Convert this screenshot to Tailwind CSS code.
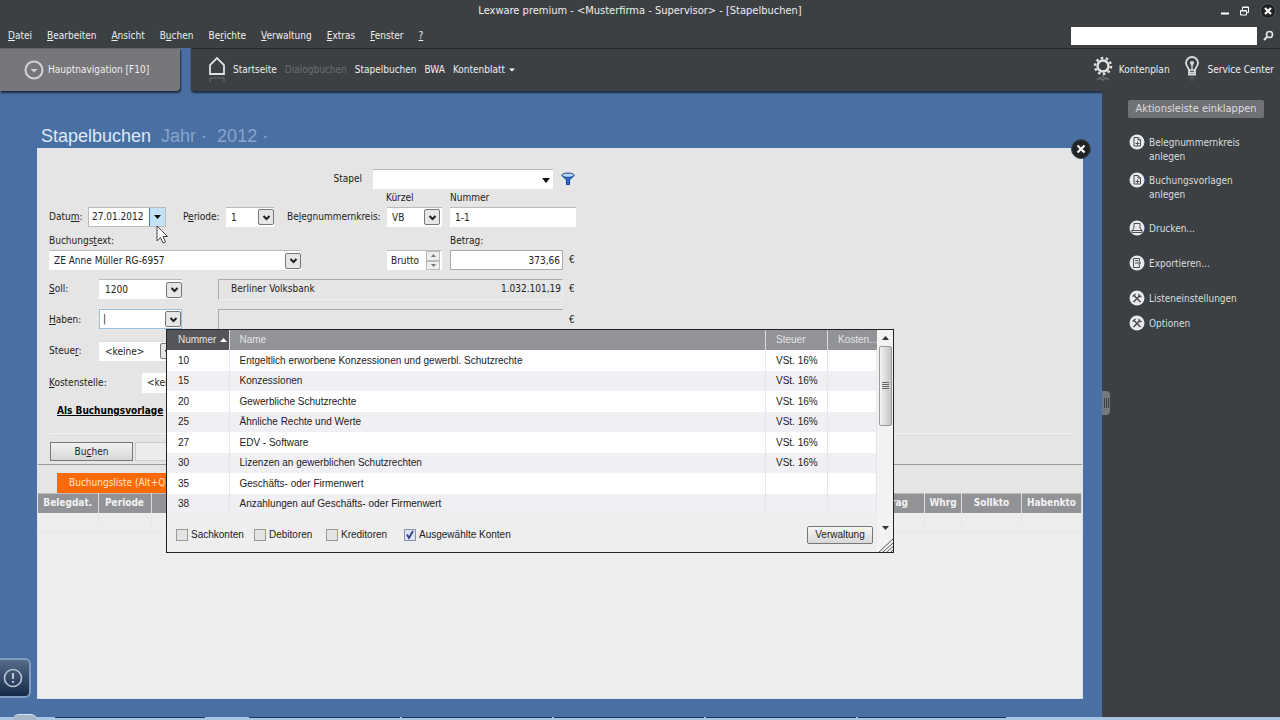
<!DOCTYPE html>
<html lang="de">
  <head>
    <meta charset="UTF-8" />
    <meta name="viewport" content="width=device-width, initial-scale=1.0" />
    <title>Lexware premium - Stapelbuchen</title>
    <script src="https://cdn.jsdelivr.net/npm/@tailwindcss/browser@4"></script>
  </head>
  <body class="h-screen flex flex-col overflow-hidden bg-[#4a70a3] font-['DejaVu_Sans_Condensed','DejaVu_Sans',sans-serif] text-[10px] leading-[14px] text-[#222]">
    <svg class="hidden">
      <symbol id="chevron" viewBox="0 0 9 9">
        <path d="M1.5 3l3 3 3-3" fill="none" stroke="#222" stroke-width="2" />
      </symbol>
      <symbol id="new-doc" viewBox="0 0 16 16">
        <circle cx="8" cy="8" r="7.5" fill="#e8e9ea" />
        <path d="M5 3.500h4l2.500 2.500v6H5zM9 3.500V6h2.500M6.500 9.500h4M8.500 7.500v4" fill="none" stroke="#4a4c50" />
      </symbol>
      <symbol id="tools" viewBox="0 0 16 16">
        <circle cx="8" cy="8" r="7.500" fill="#e8e9ea" />
        <path d="M5 5.500l6.500 6.500M11 5.500L4.500 12" fill="none" stroke="#4a4c50" stroke-width="1.500" />
        <path d="M3.500 6.500L6.500 4M10 4v2.500h2.500" fill="none" stroke="#4a4c50" stroke-width="1.300" />
      </symbol>
    </svg>

    <!-- Titel und Menü -->
    <header class="bg-[#3d4043] text-[#eee]">
      <div class="relative h-[22px] flex items-center justify-end pr-1 gap-[11px]">
        <h1 class="absolute inset-x-0 text-center text-[11px] pointer-events-none">Lexware premium - &lt;Musterfirma - Supervisor&gt; - [Stapelbuchen]</h1>
        <button aria-label="Minimieren">
          <svg class="w-2 h-3" viewBox="0 0 8 12"><path d="M0 8.500h8" stroke="#fff" stroke-width="2" /></svg>
        </button>
        <button aria-label="Wiederherstellen">
          <svg class="w-[9px] h-3" viewBox="0 0 9 12"><path d="M2.500 5V2h6v5.500H6.500M2.500 2.500h6M.5 5.500h6V10H.5zM.5 6h6" fill="none" stroke="#fff" /></svg>
        </button>
        <button aria-label="Schließen">
          <svg class="w-4 h-4" viewBox="0 0 16 16"><circle cx="8" cy="8" r="7.500" fill="#222" stroke="#55585a" /><path d="M5 5l6 6M11 5l-6 6" stroke="#fff" stroke-width="2.200" /></svg>
        </button>
      </div>
      <div class="h-[26px] flex items-center pt-[2px] pl-2 pr-[5px]">
        <nav class="flex gap-[15px]">
          <a href="#"><u>D</u>atei</a>
          <a href="#"><u>B</u>earbeiten</a>
          <a href="#"><u>A</u>nsicht</a>
          <a href="#">B<u>u</u>chen</a>
          <a href="#">Be<u>r</u>ichte</a>
          <a href="#"><u>V</u>erwaltung</a>
          <a href="#"><u>E</u>xtras</a>
          <a href="#"><u>F</u>enster</a>
          <a href="#"><u>?</u></a>
        </nav>
        <input type="text" aria-label="Suche" class="ml-auto w-[186px] h-[18px] px-1 bg-white text-black" />
        <button aria-label="Suchen" class="ml-1">
          <svg class="w-[14px] h-[14px]" viewBox="0 0 14 14" fill="none" stroke="#e4e4e4"><circle cx="8.500" cy="5.500" r="3" stroke-width="1.600" /><path d="M6.500 7.500L3 11" stroke-width="2" /></svg>
        </button>
      </div>
    </header>

    <!-- Symbolleiste -->
    <div class="h-[43px] shrink-0 flex gap-[11px] text-[#eee]">
      <button class="w-[180px] flex items-center gap-1 pl-6 bg-[#77767b] border-t border-[#66666a] rounded-br-sm shadow-[1px_2px_2px_#1c2c44]">
        <svg class="w-5 h-5" viewBox="0 0 20 20"><circle cx="10" cy="10" r="8.500" fill="none" stroke="#d4d4d6" stroke-width="2" /><path d="M6.500 9h7L10 12.500z" fill="#d4d4d6" /></svg>
        Hauptnavigation [F10]
      </button>
      <nav class="flex-1 flex items-center pl-4 pr-[6px] bg-[#3d4043] border-t border-[#25282a] rounded-bl-sm shadow-[0_2px_2px_#1c2c44]">
        <svg class="w-5 h-7" viewBox="0 0 20 28" fill="none"><path d="M3 18V9l7-7 7 7v9z" stroke="#e2e2e2" stroke-width="1.800" /><path d="M3 22h14M3 22v4M17 22v4" stroke="#6a6d70" /></svg>
        <a href="#" class="ml-[6px]">Startseite</a>
        <a href="#" class="ml-2 text-[#6a6d70]">Dialogbuchen</a>
        <a href="#" class="ml-2">Stapelbuchen</a>
        <a href="#" class="ml-2">BWA</a>
        <a href="#" class="ml-2">Kontenblatt</a>
        <svg class="ml-1 w-[6px] h-1" viewBox="0 0 6 4"><path d="M0 .5h6L3 3.500z" fill="#fff" /></svg>
        <svg class="ml-auto w-5 h-7" viewBox="0 0 20 28" fill="none">
          <circle cx="10" cy="10" r="5.500" stroke="#e2e2e2" stroke-width="2.400" />
          <circle cx="10" cy="10" r="8" stroke="#e2e2e2" stroke-width="2.400" stroke-dasharray="2.500 2.527" />
          <path d="M4 24l3-2 3 2 3-2 3 2M10 19v3" stroke="#6a6d70" stroke-width="1.500" />
        </svg>
        <a href="#" class="ml-[6px]">Kontenplan</a>
        <svg class="ml-3 w-5 h-7" viewBox="0 0 20 28" fill="none">
          <path d="M7 14c0-2-3-3.500-3-7a6 6 0 0 1 12 0c0 3.500-3 5-3 7v4.500H7z" stroke="#dadada" stroke-width="1.800" />
          <path d="M10 7v7M7 14h6M7 16.500h6" stroke="#dadada" stroke-width="1.400" /><circle cx="10" cy="7" r="2" fill="#dadada" />
          <path d="M7 22h6M8 24h4" stroke="#595c5f" />
        </svg>
        <a href="#" class="ml-[6px]">Service Center</a>
      </nav>
    </div>

    <div class="flex-1 min-h-0 flex">
      <!-- Arbeitsbereich -->
      <main class="relative flex-1 min-w-0 flex flex-col pl-[37px] pr-[19px] pb-[18px]">
        <h2 class="h-[57px] pt-[34px] pl-1 flex gap-[10px] font-['Liberation_Sans',Arial,sans-serif] text-lg leading-[22px] text-[#86a5cb]">
          <span class="text-[#dce8f6]">Stapelbuchen</span>
          <span>Jahr ·</span>
          <span>2012 ·</span>
        </h2>
        <button aria-label="Stapelbuchen schließen" class="absolute right-[11px] top-12">
          <svg class="w-5 h-5" viewBox="0 0 20 20"><circle cx="10" cy="10" r="9.500" fill="#1f2426" stroke="#3c4a55" /><path d="M6.500 6.500l7 7M13.500 6.500l-7 7" stroke="#fff" stroke-width="2.200" /></svg>
        </button>

        <section class="flex-1 min-h-0 bg-[#ededed] border border-[#dbe6f0]">
          <form class="h-[316px] bg-[#e5e5e5] border-b border-[#999]">
            <div class="pt-5 flex items-center h-10 pl-[11px]">
              <label for="stapel" class="w-[313px] text-right">Stapel</label>
              <div class="relative ml-[11px]">
                <select id="stapel" class="appearance-none block w-[180px] h-5 bg-white border-t border-[#bbb]"><option></option></select>
                <svg class="absolute right-[3px] top-[9px] w-2 h-[5px] pointer-events-none" viewBox="0 0 8 5"><path d="M0 0h8L4 5z" fill="#111" /></svg>
              </div>
              <button type="button" aria-label="Filter" class="ml-2">
                <svg class="w-[14px] h-[14px]" viewBox="0 0 14 14"><path d="M1 3.500L5.500 8v4.500h3V8L13 3.500z" fill="#2f6fd0" stroke="#123f94" /><ellipse cx="7" cy="3.200" rx="6" ry="2.200" fill="#b8d8f8" stroke="#123f94" /></svg>
              </button>
            </div>
            <div class="h-[18px] flex items-center">
              <label for="kuerzel" class="pl-[348px] w-[412px]">Kürzel</label>
              <label for="nummer">Nummer</label>
            </div>
            <div class="h-5 flex items-center pl-[11px]">
              <label for="datum" class="w-[39px]">Datu<u>m</u>:</label>
              <div class="w-[78px] h-5 flex bg-white border border-[#bbb]">
                <input id="datum" type="text" value="27.01.2012" class="w-[60px] pl-[3px]" />
                <button type="button" aria-label="Kalender" class="flex-1 grid place-items-center bg-[#c3e2f5] border-l border-[#3c7fb1]">
                  <svg class="w-[7px] h-1" viewBox="0 0 7 4"><path d="M0 0h7L3.500 4z" fill="#111" /></svg>
                </button>
              </div>
              <label for="periode" class="ml-[17px] w-[43px]">P<u>e</u>riode:</label>
              <div class="relative">
                <select id="periode" class="appearance-none block w-12 h-5 pl-[5px] bg-white border-t border-[#bbb]"><option>1</option></select>
                <span class="absolute right-0 top-[2px] size-4 grid place-items-center bg-[#e6e6e6] border border-[#777] rounded-xs pointer-events-none"><svg class="size-[9px]"><use href="#chevron" /></svg></span>
              </div>
              <label for="kuerzel" class="ml-[13px] w-[100px]">Be<u>l</u>egnummernkreis:</label>
              <div class="relative">
                <select id="kuerzel" class="appearance-none block w-[55px] h-5 pl-[5px] bg-white border-t border-[#bbb]"><option>VB</option></select>
                <span class="absolute right-[2px] top-[2px] size-4 grid place-items-center bg-[#e6e6e6] border border-[#777] rounded-xs pointer-events-none"><svg class="size-[9px]"><use href="#chevron" /></svg></span>
              </div>
              <input id="nummer" type="text" value="1-1" class="ml-2 w-[126px] h-5 pl-[5px] bg-white border-t border-[#bbb]" />
            </div>
            <div class="mt-[6px] h-4 flex items-center pl-[11px]">
              <label for="text" class="w-[401px]">Buchungs<u>t</u>ext:</label>
              <label for="betrag">Betra<u>g</u>:</label>
            </div>
            <div class="mt-px h-5 flex items-center pl-[11px]">
              <div class="w-[252px] h-5 flex items-center bg-white border-t border-[#bbb]">
                <input id="text" type="text" value="ZE Anne Müller RG-6957" class="flex-1 min-w-0 pl-[5px]" />
                <button type="button" aria-label="Texte anzeigen" class="size-4 grid place-items-center bg-[#e6e6e6] border border-[#777] rounded-xs"><svg class="size-[9px]"><use href="#chevron" /></svg></button>
              </div>
              <div class="ml-[86px] w-[55px] h-5 flex bg-white border-t border-[#bbb]">
                <input type="text" aria-label="Betragsart" value="Brutto" class="w-[39px] pl-1" />
                <div class="w-[14px] flex flex-col">
                  <button type="button" aria-label="Vor" class="flex-1 grid place-items-center bg-[#eee] border border-[#bbb]"><svg class="w-[5px] h-[3px]" viewBox="0 0 5 3"><path d="M0 3h5L2.500 0z" fill="#777" /></svg></button>
                  <button type="button" aria-label="Zurück" class="flex-1 grid place-items-center bg-[#eee] border border-[#bbb]"><svg class="w-[5px] h-[3px]" viewBox="0 0 5 3"><path d="M0 0h5L2.500 3z" fill="#777" /></svg></button>
                </div>
              </div>
              <input id="betrag" type="text" value="373,66" class="ml-2 w-[113px] h-5 pr-[2px] text-right bg-white border border-[#aaa]" />
              <span class="ml-[6px]">€</span>
            </div>
            <div class="mt-[9px] h-5 flex items-center pl-[11px]">
              <label for="soll" class="w-[50px]"><u>S</u>oll:</label>
              <div class="w-[83px] h-5 flex items-center bg-white border-t border-[#bbb]">
                <input id="soll" type="text" value="1200" class="flex-1 min-w-0 pl-[6px]" />
                <button type="button" aria-label="Sollkonten anzeigen" class="size-4 grid place-items-center bg-[#e6e6e6] border border-[#777] rounded-xs"><svg class="size-[9px]"><use href="#chevron" /></svg></button>
              </div>
              <output for="soll" class="ml-9 w-[345px] h-[21px] flex items-center justify-between pl-3 pr-px border border-[#aaa] border-r-[#eee] border-b-[#eee]"><span>Berliner Volksbank</span><span>1.032.101,19</span></output>
              <span class="ml-[6px]">€</span>
            </div>
            <div class="mt-[10px] h-5 flex items-center pl-[11px]">
              <label for="haben" class="pt-[2px] w-[50px]"><u>H</u>aben:</label>
              <div class="relative">
                <div class="w-[83px] h-5 flex items-center bg-white border border-[#9cc0dc]">
                  <input id="haben" type="text" value="|" class="flex-1 min-w-0 pl-[3px]" />
                  <button type="button" aria-label="Habenkonten anzeigen" class="size-4 grid place-items-center bg-[#e6e6e6] border border-[#777] rounded-xs"><svg class="size-[9px]"><use href="#chevron" /></svg></button>
                </div>

                <!-- Kontenauswahl -->
                <div class="absolute z-10 left-[67px] top-full w-[728px] h-[224px] flex flex-col bg-[#eee] border border-[#222] font-['Liberation_Sans',Arial,sans-serif]">
                  <div class="flex-1 min-h-0 flex flex-col pr-4">
                    <table class="w-full table-fixed text-left">
                      <colgroup><col class="w-[62px]" /><col /><col class="w-[62px]" /><col class="w-[49px]" /></colgroup>
                      <thead class="bg-[#929397] text-[#e4e4e8]">
                        <tr class="h-5">
                          <th class="pl-[11px] font-normal bg-[#55565a] border-r border-[#ddd]"><span class="flex items-center gap-1">Nummer <svg class="w-[7px] h-1" viewBox="0 0 7 4"><path d="M0 4h7L3.500 0z" fill="#fff" /></svg></span></th>
                          <th class="pl-[10px] font-normal border-r border-[#ddd]">Name</th>
                          <th class="pl-[10px] font-normal border-r border-[#ddd]">Steuer</th>
                          <th class="pl-[10px] font-normal whitespace-nowrap">Kosten...</th>
                        </tr>
                      </thead>
                      <tbody class="[&_td]:border-r [&_td]:border-[#e6e6ea] [&_tr:nth-child(odd)]:bg-white [&_tr:nth-child(even)]:bg-[#f0f0f4]">
                        <tr class="h-[21px]"><td class="pl-[11px]">10</td><td class="pl-[10px]">Entgeltlich erworbene Konzessionen und gewerbl. Schutzrechte</td><td class="pl-[10px]">VSt. 16%</td><td></td></tr>
                        <tr class="h-5"><td class="pl-[11px]">15</td><td class="pl-[10px]">Konzessionen</td><td class="pl-[10px]">VSt. 16%</td><td></td></tr>
                        <tr class="h-[21px]"><td class="pl-[11px]">20</td><td class="pl-[10px]">Gewerbliche Schutzrechte</td><td class="pl-[10px]">VSt. 16%</td><td></td></tr>
                        <tr class="h-5"><td class="pl-[11px]">25</td><td class="pl-[10px]">Ähnliche Rechte und Werte</td><td class="pl-[10px]">VSt. 16%</td><td></td></tr>
                        <tr class="h-[21px]"><td class="pl-[11px]">27</td><td class="pl-[10px]">EDV - Software</td><td class="pl-[10px]">VSt. 16%</td><td></td></tr>
                        <tr class="h-5"><td class="pl-[11px]">30</td><td class="pl-[10px]">Lizenzen an gewerblichen Schutzrechten</td><td class="pl-[10px]">VSt. 16%</td><td></td></tr>
                        <tr class="h-[21px]"><td class="pl-[11px]">35</td><td class="pl-[10px]">Geschäfts- oder Firmenwert</td><td></td><td></td></tr>
                        <tr class="h-5"><td class="pl-[11px]">38</td><td class="pl-[10px]">Anzahlungen auf Geschäfts- oder Firmenwert</td><td></td><td></td></tr>
                      </tbody>
                    </table>
                    <div class="flex-1 flex items-center pt-1 pl-[9px] pr-1">
                      <label class="w-[78px] flex items-center gap-[3px]"><input type="checkbox" class="appearance-none size-3 bg-[#e4e4e4] border border-[#999]" />Sachkonten</label>
                      <label class="w-[72px] flex items-center gap-[3px]"><input type="checkbox" class="appearance-none size-3 bg-[#e4e4e4] border border-[#999]" />Debitoren</label>
                      <label class="w-[78px] flex items-center gap-[3px]"><input type="checkbox" class="appearance-none size-3 bg-[#e4e4e4] border border-[#999]" />Kreditoren</label>
                      <label class="relative flex items-center gap-[3px]">
                        <input type="checkbox" checked class="appearance-none size-3 bg-[#dde3f2] border border-[#8a90a8]" />
                        <svg class="absolute left-px w-[10px] h-[10px] pointer-events-none" viewBox="0 0 10 10"><path d="M2 4.500l2 3.500 4-7" fill="none" stroke="#33408c" stroke-width="1.800" /></svg>
                        Ausgewählte Konten
                      </label>
                      <button type="button" class="ml-auto w-[66px] h-[18px] bg-linear-to-b from-[#f6f6f6] to-[#d8d8d8] border border-[#777] rounded-xs">Verwaltung</button>
                    </div>
                  </div>
                  <div class="absolute right-0 inset-y-0 w-4 flex flex-col items-center bg-[#f2f2f2]">
                    <svg class="mt-[6px] w-[7px] h-1" viewBox="0 0 7 4"><path d="M0 4h7L3.500 0z" fill="#333" /></svg>
                    <div class="mt-[6px] w-[13px] h-20 grid place-items-center bg-linear-to-r from-[#f4f4f4] to-[#c4c4c8] border border-[#999] rounded-xs">
                      <svg class="w-[7px] h-2" viewBox="0 0 7 8"><path d="M0 .5h7M0 2.500h7M0 4.500h7M0 6.500h7" stroke="#666" /></svg>
                    </div>
                    <svg class="mt-auto w-[7px] h-1" viewBox="0 0 7 4"><path d="M0 0h7L3.500 4z" fill="#333" /></svg>
                    <svg class="mt-[8px] w-4 h-[14px]" viewBox="0 0 16 14"><path d="M2 14L16 1M6 14L16 5M10 14l6-5.500M14 14l2-2" stroke="#555" /></svg>
                  </div>
                </div>
              </div>
              <output for="haben" class="ml-9 w-[345px] h-[21px] border-t border-l border-[#aaa]"></output>
              <span class="pt-[2px] ml-[6px]">€</span>
            </div>
            <div class="mt-3 h-5 flex items-center pl-[11px]">
              <label for="steuer" class="w-[50px]">Steue<u>r</u>:</label>
              <div class="relative">
                <select id="steuer" class="appearance-none block w-[77px] h-5 pl-[6px] bg-white border-t border-[#ddd]"><option>&lt;keine&gt;</option></select>
                <span class="absolute right-0 top-[2px] size-4 grid place-items-center bg-[#e6e6e6] border border-[#777] rounded-xs pointer-events-none"><svg class="size-[9px]"><use href="#chevron" /></svg></span>
              </div>
            </div>
            <div class="mt-3 h-5 flex items-center pl-[11px]">
              <label for="kostenstelle" class="w-[93px]"><u>K</u>ostenstelle:</label>
              <select id="kostenstelle" class="appearance-none w-[77px] h-5 pl-[5px] bg-white"><option>&lt;keine&gt;</option></select>
            </div>
            <div class="mt-[10px] h-4 flex items-center pl-[19px]">
              <a href="#" class="font-bold underline text-black">Als Buchungsvorlage</a>
            </div>
            <div class="mt-[14px] mr-[9px] ml-3 border-t border-[#f4f4f4]"></div>
            <div class="mt-2 flex gap-[2px] pl-3">
              <button type="button" class="w-[83px] h-[19px] bg-linear-to-b from-[#f2f2f2] to-[#d6d6d6] border border-[#777]">Bu<u>c</u>hen</button>
              <button type="button" aria-label="Verwerfen" class="w-[83px] h-[19px] bg-[#ececec] border border-[#ccc]"></button>
            </div>
          </form>

          <!-- Buchungsliste -->
          <div class="h-7 pt-2 pl-[19px] flex bg-[#e5e5e5]">
            <button class="w-[130px] pl-3 text-left whitespace-nowrap bg-[#fb6a05] text-[#ffe6d0]">Buchungsliste (Alt+Q)</button>
          </div>
          <table class="w-full table-fixed border-t border-[#bbb]">
            <colgroup><col class="w-[60px]" /><col class="w-[53px]" /><col /><col class="w-[70px]" /><col class="w-[37px]" /><col class="w-[60px]" /><col class="w-[60px]" /></colgroup>
            <thead class="bg-[#929397] text-[#f2f2f2]">
              <tr class="h-[19px] [&_th]:border-r [&_th]:border-[#ddd]">
                <th>Belegdat.</th><th>Periode</th><th></th><th class="pr-4 text-right">Betrag</th><th>Whrg</th><th>Sollkto</th><th>Habenkto</th>
              </tr>
            </thead>
            <tbody>
              <tr class="h-5 border-b border-[#e6e6e6] [&_td]:border-r [&_td]:border-[#e8e8e8]"><td></td><td></td><td></td><td></td><td></td><td></td><td></td></tr>
            </tbody>
          </table>
        </section>

        <!-- Mauszeiger -->
        <svg class="absolute left-[156px] top-[134px] w-3 h-[19px]" viewBox="0 0 12 19"><path d="M1 1v15l3.500-3.500L7 18l2.500-1-2.500-5.500h4.500z" fill="#fff" stroke="#444" /></svg>

        <button aria-label="Hinweise" class="absolute left-0 bottom-[19px] w-[31px] h-10 flex items-center pl-[3px] bg-linear-to-b from-[#566b88] to-[#172b49] border-2 border-l-0 border-[#7f9cc4] rounded-r-md">
          <svg class="w-5 h-5" viewBox="0 0 20 20" fill="none" stroke="#b8c4d4" stroke-width="1.600"><circle cx="10" cy="10" r="8.500" /><path d="M10 5v6M10 13v2" stroke-width="2" /></svg>
        </button>
      </main>

      <!-- Aktionsleiste -->
      <aside class="relative w-[178px] pt-[9px] pl-[26px] bg-[#3d4043] text-[#dcdcdc]">
        <button class="w-[136px] h-[18px] text-[11px] bg-[#707175] rounded-xs">Aktionsleiste einklappen</button>
        <ul class="mt-4 pl-px">
          <li><a href="#" class="flex gap-1"><svg class="size-4 shrink-0"><use href="#new-doc" /></svg><span class="pt-[2px]">Belegnummernkreis<br />anlegen</span></a></li>
          <li class="mt-2"><a href="#" class="flex gap-1"><svg class="size-4 shrink-0"><use href="#new-doc" /></svg><span class="pt-[2px]">Buchungsvorlagen<br />anlegen</span></a></li>
          <li class="mt-[18px]"><a href="#" class="flex gap-1">
            <svg class="size-4 shrink-0" viewBox="0 0 16 16"><circle cx="8" cy="8" r="7.500" fill="#e8e9ea" /><path d="M5 8V3.500h6V8M5 8L3 10.500v2h10v-2L11 8M3 10.500h10" fill="none" stroke="#4a4c50" /></svg>
            <span class="pt-[2px]">Drucken...</span></a></li>
          <li class="mt-[19px]"><a href="#" class="flex gap-1">
            <svg class="size-4 shrink-0" viewBox="0 0 16 16"><circle cx="8" cy="8" r="7.500" fill="#e8e9ea" /><path d="M10.500 6V3.500h-6v9h6V10M6 8h5.500M9.500 6l2 2-2 2M6 5.500h3" fill="none" stroke="#4a4c50" /></svg>
            <span class="pt-[2px]">Exportieren...</span></a></li>
          <li class="mt-[19px]"><a href="#" class="flex gap-1"><svg class="size-4 shrink-0"><use href="#tools" /></svg><span class="pt-[2px]">Listeneinstellungen</span></a></li>
          <li class="mt-[9px]"><a href="#" class="flex gap-1"><svg class="size-4 shrink-0"><use href="#tools" /></svg><span class="pt-[2px]">Optionen</span></a></li>
        </ul>
        <button aria-label="Leiste einklappen" class="absolute left-0 top-[300px] w-2 h-6 grid place-items-center bg-[#77787b] rounded-r-sm">
          <svg class="w-[5px] h-[10px]" viewBox="0 0 5 10"><path d="M.5 0v10M2.500 0v10M4.500 0v10" stroke="#3d4043" /></svg>
        </button>
      </aside>
    </div>

    <!-- Taskleiste -->
    <footer class="relative h-[3px] shrink-0 flex gap-[2px] pl-[55px] bg-[#a9c4e0]">
      <span class="absolute left-[13px] bottom-0 w-6 h-[6px] rounded-t-full bg-[#a8b8ca] border-t border-[#dce8f4]"></span>
      <span class="w-[150px] border-t border-[#1c3556]"></span>
      <span class="ml-[42px] w-[151px] border-t border-[#1c3556]"></span>
      <span class="w-[150px] border-t border-[#1c3556]"></span>
      <span class="w-[150px] border-t border-[#1c3556]"></span>
      <span class="w-[150px] border-t border-[#1c3556]"></span>
      <span class="w-[148px] border-t border-[#1c3556]"></span>
    </footer>
  </body>
</html>
